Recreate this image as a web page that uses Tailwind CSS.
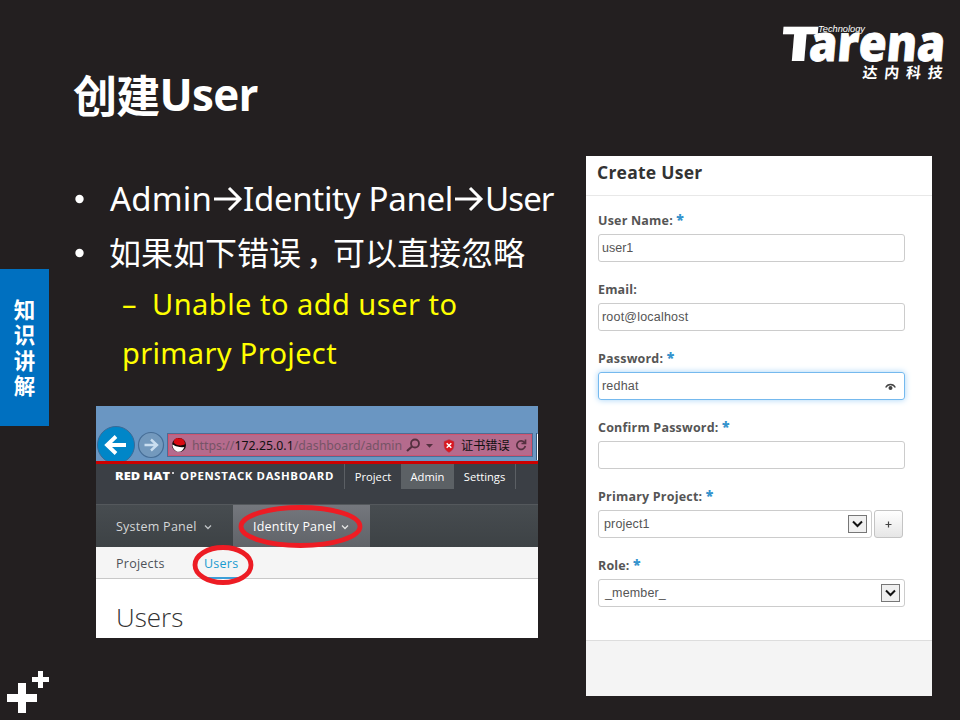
<!DOCTYPE html>
<html lang="zh-CN">
<head>
<meta charset="utf-8">
<title>创建User</title>
<script src="https://cdn.jsdelivr.net/npm/@tailwindcss/browser@4"></script>
</head>
<body class="overflow-hidden bg-[#231f20]">
<div class="flex h-[720px] w-[960px] overflow-hidden bg-[#231f20] font-['Noto_Sans','Noto_Sans_CJK_SC',sans-serif] text-white">

  <!-- Section rail -->
  <aside class="flex w-[49px] flex-none flex-col pt-[269px]">
    <div class="flex h-[157px] flex-none flex-col items-center justify-center bg-[#0070c0] pb-[2px] font-['Noto_Sans_CJK_SC',sans-serif] text-[21.5px] leading-[25.5px] font-bold">
      <span>知</span><span>识</span><span>讲</span><span>解</span>
    </div>
    <svg class="mt-[245px] block flex-none" width="49" height="43" viewBox="0 671 49 43" fill="#fff">
      <path d="M18 683h8v11h11v8H26v11h-8v-11H7v-8h11z"/>
      <path d="M38 671h5v6h6v5h-6v6h-5v-6h-6v-5h6z"/>
    </svg>
  </aside>

  <!-- Slide text and browser capture -->
  <main class="flex w-[537px] flex-none flex-col">
    <h1 class="mt-[62px] mb-[2px] ml-[24px] flex h-[64px] items-center font-bold whitespace-nowrap">
      <span class="font-['Noto_Sans_CJK_SC',sans-serif] text-[44px] tracking-[-0.8px]">创建</span><span class="font-['Open_Sans',sans-serif] text-[44px] tracking-[-0.7px]">User</span>
    </h1>
    <ul class="mt-[44px] ml-[25px] whitespace-nowrap">
      <li class="flex h-[54px] items-center text-[33px]"><span class="flex w-[36px] flex-none"><svg class="block" width="12" height="12" viewBox="0 0 12 12"><circle cx="5.500" cy="6" r="4.200" fill="#fff"/></svg></span><span class="flex w-[133px] items-center"><span class="w-[103px] tracking-[0.200px]">Admin</span><svg width="30" height="26" viewBox="0 0 30 26" fill="none" stroke="#fff" stroke-width="3"><path d="M1 13h25M16 2l11 11-11 11"/></svg></span><span class="flex w-[242px] items-center"><span class="w-[211px] tracking-[-0.300px]">Identity Panel</span><svg width="30" height="26" viewBox="0 0 30 26" fill="none" stroke="#fff" stroke-width="3"><path d="M1 13h25M16 2l11 11-11 11"/></svg></span><span class="tracking-[-0.900px]">User</span></li>
      <li class="flex h-[53px] items-center pb-[4px] text-[32px]"><span class="flex w-[35px] flex-none"><svg class="mt-[5px] block" width="12" height="12" viewBox="0 0 12 12"><circle cx="5.500" cy="6" r="4.200" fill="#fff"/></svg></span><span class="font-['Noto_Sans_CJK_SC',sans-serif]">如果如下错误<span class="relative left-[5px]">，</span>可以直接忽略</span></li>
    </ul>
    <div class="ml-[73px] flex flex-col text-[29px] leading-[49px] whitespace-nowrap text-[#ffff00]">
      <div class="flex"><span class="w-[30px]">–</span><span class="tracking-[0.480px]">Unable to add user to</span></div>
      <div class="tracking-[0.350px]">primary Project</div>
    </div>

    <section class="mt-[29px] ml-[47px] flex h-[232px] w-[442px] flex-none flex-col bg-white font-['Open_Sans',sans-serif] whitespace-nowrap">
      <svg class="block flex-none" width="442" height="58" viewBox="96 406 442 58">
        <rect x="96" y="406" width="442" height="58" fill="#6a96c2"/>
        <circle cx="116" cy="445" r="18.500" fill="#0086c8" stroke="#3b6a96"/>
        <path d="M126 445h-18M116 436.500l-9 8.500 9 8.500" fill="none" stroke="#fff" stroke-width="3.800"/>
        <circle cx="151" cy="445" r="12.500" fill="#7399bd" stroke="#466d96" stroke-width="1.200"/>
        <path d="M144.500 445h12M151 439.500l6 5.500-6 5.500" fill="none" stroke="#c9def0" stroke-width="2.400"/>
        <rect x="167.500" y="433.500" width="365" height="23" fill="#b56b8d" stroke="#4f6c94"/>
        <rect x="168.500" y="434.500" width="363" height="21" fill="none" stroke="#cf5470"/>
        <circle cx="179" cy="445" r="7" fill="#16090b"/>
        <path d="M173.500 442.500c1-5 4-5 5.500-4 3-1 6 2 6 5.500-3 2.500-9 1.500-11.500-1.500z" fill="#d90a12"/>
        <path d="M172.300 444.500c2 .5 3 2 5 2 2 .5 4 1 7 .5-1 3-3 4.800-5.500 4.800-3.500 0-6-3-6.500-7.300z" fill="#fff"/>
        <text x="192" y="450" font-size="13" font-family="Noto Sans, sans-serif" textLength="210" lengthAdjust="spacingAndGlyphs" fill="#755466">https://<tspan fill="#111">172.25.0.1</tspan>/dashboard/admin</text>
        <circle cx="415" cy="443.500" r="4" fill="none" stroke="#54303f" stroke-width="1.800"/>
        <path d="M412 446.500l-5 4.500" stroke="#54303f" stroke-width="2.200"/>
        <path d="M426 444h7l-3.500 3.700z" fill="#54303f"/>
        <path d="M449 439.500l5 2v4c0 3-2 5.500-5 7-3-1.500-5-4-5-7v-4z" fill="#d91720" stroke="#a94b5e" stroke-width=".5"/>
        <path d="M446.700 443.200l4.600 4.600M451.300 443.200l-4.600 4.600" stroke="#fff" stroke-width="1.500"/>
        <text x="461" y="450" font-size="12.200" font-family="Noto Sans CJK SC, sans-serif" fill="#111">证书错误</text>
        <path d="M524.500 442.500a4.300 4.300 0 1 0 .8 3.500M525.500 439.500v4h-4" fill="none" stroke="#54303f" stroke-width="1.700"/>
        <path d="M536.500 433v27" stroke="#35577a"/><path d="M537.500 434v26" stroke="#fff"/>
        <rect x="96" y="461" width="442" height="3" fill="#cc0000"/>
      </svg>
      <nav class="flex h-[40px] flex-none items-start bg-[#3b3f45] text-[11.200px] leading-[26px]">
        <svg class="block flex-none" width="248" height="25" viewBox="96 464 248 25" fill="#fff"><text x="115" y="480" font-size="11" font-weight="800" textLength="55" lengthAdjust="spacingAndGlyphs">RED HAT</text><circle cx="173" cy="473" r="1"/><text x="180" y="480" font-size="11" font-weight="700" textLength="154" lengthAdjust="spacingAndGlyphs" letter-spacing=".6">OPENSTACK DASHBOARD</text></svg>
        <span class="h-[25px] w-[57px] border-l border-[#5b5f64] text-center">Project</span>
        <span class="h-[25px] w-[53px] bg-[#5c6165] text-center">Admin</span>
        <span class="h-[25px] w-[62px] border-r border-[#5b5f64] text-center">Settings</span>
      </nav>
      <nav class="flex h-[43px] flex-none border-t border-[#54585c] bg-linear-to-b from-[#474c50] to-[#3d4245] text-[12.500px] leading-[43px] text-[#d5d7d8]">
        <span class="flex w-[137px] items-center pl-[20px]"><span class="w-[81px] tracking-[0.250px]">System Panel</span><svg class="mt-[2px] ml-[7px]" width="8" height="6" viewBox="0 0 8 6" fill="none" stroke="#bfc3c5" stroke-width="1.300"><path d="M1 1.500l3 3 3-3"/></svg></span>
        <span class="relative flex w-[137px] items-center bg-linear-to-b from-[#74777d] to-[#606368] pl-[20px] text-white"><span class="w-[83px] tracking-[0.220px]">Identity Panel</span><svg class="mt-[2px] ml-[5px]" width="8" height="6" viewBox="0 0 8 6" fill="none" stroke="#e5e5e5" stroke-width="1.300"><path d="M1 1.500l3 3 3-3"/></svg>
          <svg class="absolute top-[-1px] left-[5px]" width="125" height="46" viewBox="0 0 125 46"><ellipse cx="62.500" cy="22.500" rx="59.500" ry="19" fill="none" stroke="#ed1c24" stroke-width="4.800"/></svg>
        </span>
      </nav>
      <nav class="flex h-[32px] flex-none border-b border-[#c8c8c8] bg-[#f5f5f5] pl-[20px] text-[12.500px] leading-[34px] text-[#4d5258]">
        <span class="w-[88px] tracking-[0.250px]">Projects</span>
        <span class="relative h-[32px] border-b-2 border-[#3d9fd8] tracking-[0.250px] text-[#1a9bd0]">Users
          <svg class="absolute top-[-3px] left-[-12px]" width="62" height="42" viewBox="0 0 62 42"><ellipse cx="31" cy="21" rx="28" ry="17.500" fill="none" stroke="#ed1c24" stroke-width="4.800"/></svg>
        </span>
      </nav>
      <div class="pt-[19px] pl-[20px] text-[26px] leading-[38px] font-light text-[#333]">Users</div>
    </section>
  </main>

  <!-- Logo and form -->
  <div class="flex w-[374px] flex-none flex-col">
    <svg class="mt-[20px] block flex-none" width="374" height="62" viewBox="586 20 374 62" fill="#fff" font-family="Open Sans, sans-serif">
      <text transform="translate(779 61) skewX(-5)" font-size="48" font-weight="800" textLength="38" lengthAdjust="spacingAndGlyphs">T</text>
      <text transform="translate(808 61) skewX(-5)" font-size="50" font-weight="800" stroke="#fff" stroke-width=".8" textLength="136" lengthAdjust="spacingAndGlyphs">arena</text>
      <text x="818" y="32" font-size="9" font-family="Liberation Sans, sans-serif" font-style="italic" textLength="47" lengthAdjust="spacingAndGlyphs">Technology</text>
      <text transform="translate(862 77.500) skewX(-6)" font-size="15" font-weight="700" font-family="Noto Sans CJK SC, sans-serif" letter-spacing="6.800">达内科技</text>
    </svg>
    <form class="mt-[74px] flex h-[540px] w-[346px] flex-none flex-col bg-white font-['Liberation_Sans',sans-serif] text-[12.500px] text-[#555]">
      <h2 class="h-[40px] flex-none border-b border-[#e8e8e8] pl-[11px] font-['Open_Sans',sans-serif] text-[17.500px] leading-[33px] font-bold tracking-[0.250px] text-[#333]">Create User</h2>
      <div class="flex flex-col gap-[9px] pt-[10px] pl-[12px]">
        <div class="h-[60px]"><label class="block h-[28px] font-['Open_Sans',sans-serif] text-[12.500px] leading-[30px] font-bold tracking-[0.200px]">User Name: <b class="text-[14px] leading-none text-[#3493cd]">*</b></label><div class="flex h-[28px] w-[307px] items-center rounded-[3px] border border-[#ccc] pr-[4px] pl-[3px]">user1</div></div>
        <div class="h-[60px]"><label class="block h-[28px] font-['Open_Sans',sans-serif] text-[12.500px] leading-[30px] font-bold tracking-[0.150px]">Email:</label><div class="flex h-[28px] w-[307px] items-center rounded-[3px] border border-[#ccc] pr-[4px] pl-[3px] tracking-[0.200px]">root@localhost</div></div>
        <div class="h-[60px]"><label class="block h-[28px] font-['Open_Sans',sans-serif] text-[12.500px] leading-[30px] font-bold tracking-[0.200px]">Password: <b class="text-[14px] leading-none text-[#3493cd]">*</b></label><div class="flex h-[28px] w-[307px] items-center justify-between rounded-[3px] border border-[#75b9ee] pr-[4px] pl-[3px] tracking-[0.200px] shadow-[0_0_6px_#a5d3f7]">redhat<svg class="mt-[2px] mr-[4px]" width="11" height="8" viewBox="0 0 11 8"><path d="M.7 4.500c2-4 7.600-4 9.600 0" fill="none" stroke="#444" stroke-width="1.400"/><circle cx="5.500" cy="5" r="2" fill="#444"/></svg></div></div>
        <div class="h-[60px]"><label class="block h-[28px] font-['Open_Sans',sans-serif] text-[12.500px] leading-[30px] font-bold tracking-[0.200px]">Confirm Password: <b class="text-[14px] leading-none text-[#3493cd]">*</b></label><div class="h-[28px] w-[307px] rounded-[3px] border border-[#ccc]"></div></div>
        <div class="h-[60px]"><label class="block h-[28px] font-['Open_Sans',sans-serif] text-[12.500px] leading-[30px] font-bold tracking-[0.200px]">Primary Project: <b class="text-[14px] leading-none text-[#3493cd]">*</b></label><div class="flex gap-[2px]"><div class="flex h-[28px] w-[274px] items-center justify-between rounded-[3px] border border-[#ccc] pr-[4px] pl-[5px] tracking-[0.150px]">project1<svg width="19" height="18" viewBox="0 0 19 18"><rect x=".5" y=".5" width="18" height="17" fill="#f0f0f0" stroke="#777"/><path d="M5 6.500l4.500 4.500L14 6.500" fill="none" stroke="#111" stroke-width="2"/></svg></div><div class="flex h-[28px] w-[29px] items-center justify-center rounded-[3px] border border-[#c4c4c4] bg-linear-to-b from-white to-[#e6e6e6]"><svg width="7" height="7" viewBox="0 0 7 7"><path d="M3.500 .5v6M.5 3.500h6" stroke="#444" stroke-width="1.200"/></svg></div></div></div>
        <div class="h-[60px]"><label class="block h-[28px] font-['Open_Sans',sans-serif] text-[12.500px] leading-[30px] font-bold tracking-[0.150px]">Role: <b class="text-[14px] leading-none text-[#3493cd]">*</b></label><div class="flex h-[28px] w-[307px] items-center justify-between rounded-[3px] border border-[#ccc] pr-[4px] pl-[6px] tracking-[0.150px]">_member_<svg width="19" height="18" viewBox="0 0 19 18"><rect x=".5" y=".5" width="18" height="17" fill="#f0f0f0" stroke="#777"/><path d="M5 6.500l4.500 4.500L14 6.500" fill="none" stroke="#111" stroke-width="2"/></svg></div></div>
      </div>
      <div class="mt-auto h-[56px] flex-none border-t border-[#ddd] bg-[#f4f4f4]"></div>
    </form>
  </div>
</div>
</body>
</html>
